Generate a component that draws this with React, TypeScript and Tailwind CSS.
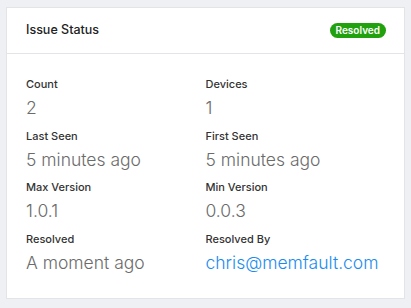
import React from 'react';

const fields: { label: string; value: string; link?: boolean }[] = [
  { label: 'Count', value: '2' },
  { label: 'Devices', value: '1' },
  { label: 'Last Seen', value: '5 minutes ago' },
  { label: 'First Seen', value: '5 minutes ago' },
  { label: 'Max Version', value: '1.0.1' },
  { label: 'Min Version', value: '0.0.3' },
  { label: 'Resolved', value: 'A moment ago' },
  { label: 'Resolved By', value: 'chris@memfault.com', link: true },
];

export default function App() {
  return (
    <div
      className="w-[411px] h-[308px] bg-[#eff0f4] pt-[7px] px-[6px]"
      style={{ fontFamily: 'Inter, "Noto Sans", sans-serif' }}
    >
      <div className="bg-white border border-[#e3e4e8] h-[292px]">
        <div className="h-[46px] flex items-center justify-between pl-[19px] pr-[18px] border-b border-[#e3e4e8]">
          <span className="text-[12.5px] font-medium text-[#222]">Issue Status</span>
          <span className="bg-[#22a10e] text-white text-[10px] font-semibold rounded-full h-[15px] px-[6px] flex items-center">
            Resolved
          </span>
        </div>
        <div className="grid grid-cols-2 gap-y-[7.5px] pl-[19px] pr-[19px] pt-[22px]">
          {fields.map((f) => (
            <div key={f.label} className="flex flex-col gap-[4px]">
              <span className="text-[11px] leading-[16px] font-medium text-[#333]">{f.label}</span>
              <span
                className={`text-[17.5px] leading-[24px] font-light ${f.link ? 'text-[#1a8cf0]' : 'text-[#6b6b6b]'}`}
              >
                {f.value}
              </span>
            </div>
          ))}
        </div>
      </div>
    </div>
  );
}
